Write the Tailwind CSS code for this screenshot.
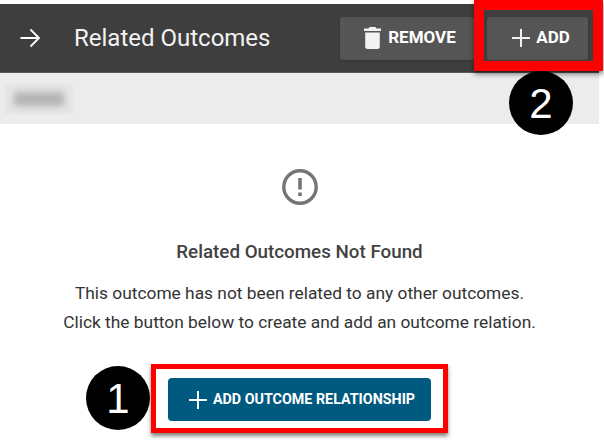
<!DOCTYPE html>
<html lang="en">
<head>
  <meta charset="UTF-8" />
  <title>Related Outcomes</title>
  <script src="https://cdn.jsdelivr.net/npm/@tailwindcss/browser@4"></script>
</head>
<body class="bg-white font-['Roboto',sans-serif] overflow-hidden">
  <div class="relative w-[604px] h-[444px] pt-1 overflow-hidden">
    <div class="w-[599px]">
      <!-- Header -->
      <div class="h-[69px] bg-[#3e3e3e] flex items-center text-white border-b border-[#5a5a5a]">
        <svg class="ml-[19px] w-[22px] h-[22px]" viewBox="0 0 22 22" fill="none" stroke="#fff" stroke-width="1.8">
          <path d="M1.5 11H20M11.5 2.5 20 11l-8.5 8.5" />
        </svg>
        <span class="ml-[33px] text-[24px] text-[#f2f2f2]">Related Outcomes</span>
        <div class="ml-auto mr-[11px] flex gap-[13px]">
          <button class="w-[134px] h-[43px] pl-[6px] bg-[#555555] rounded-[3px] flex items-center justify-center gap-[7px] text-[17px] font-bold shadow-sm">
            <svg class="w-[17px] h-[22px]" viewBox="0 0 17 22" fill="#f2f2f2">
              <path d="M5.5 0h6l1 1.5H17v2.5H0V1.5h4.500zM1.200 5.500h14.600V19.500a2.500 2.500 0 0 1-2.500 2.500H3.700a2.500 2.500 0 0 1-2.500-2.500z" />
            </svg>
            <span>REMOVE</span>
          </button>
          <button class="w-[101px] h-[43px] pl-[7px] bg-[#555555] rounded-[3px] flex items-center justify-center gap-[6px] text-[17px] font-bold shadow-sm">
            <svg class="w-[18px] h-[18px]" viewBox="0 0 18 18" stroke="#f2f2f2" stroke-width="2"><path d="M9 0v18M0 9h18" /></svg>
            <span>ADD</span>
          </button>
        </div>
      </div>
      <!-- Blurred subheader -->
      <div class="h-[51px] bg-[#ececec] flex items-center">
        <div class="ml-[5px] w-[68px] h-[30px] bg-[#e5e5e5] flex items-center justify-center blur-[1px]">
          <div class="w-[50px] h-[14px] bg-[#b4b4b4] blur-[3px]"></div>
        </div>
      </div>
      <!-- Empty state -->
      <div class="flex flex-col items-center">
        <svg class="mt-[45px] w-9 h-9" viewBox="0 0 36 36" fill="none">
          <circle cx="18" cy="18" r="16.200" stroke="#757575" stroke-width="3.400" />
          <path d="M16.200 9h3.600v11.500h-3.600zM16.200 23.500h3.600v3.600h-3.600z" fill="#757575" />
        </svg>
        <h2 class="mt-[34px] text-[18.800px] leading-[26px] font-medium text-[#424242]">Related Outcomes Not Found</h2>
        <p class="mt-[14px] text-[17.350px] leading-[29px] text-[#333333] text-center whitespace-nowrap">This outcome has not been related to any other outcomes.<br />Click the button below to create and add an outcome relation.</p>
        <button class="mt-[41px] w-[263px] h-[43px] pl-[5px] bg-[#005a80] rounded-[4px] flex items-center justify-center gap-[6px] text-white text-[14.300px] font-bold">
          <svg class="w-[18px] h-[18px]" viewBox="0 0 18 18" stroke="#fff" stroke-width="2"><path d="M9 0v18M0 9h18" /></svg>
          <span>ADD OUTCOME RELATIONSHIP</span>
        </button>
      </div>
    </div>
    <!-- Callouts -->
    <div class="absolute left-[474px] top-0 w-[129px] h-[71px] border-[10px] border-[#fe0000] shadow-[0_3px_5px_rgba(0,0,0,0.5)]"></div>
    <div class="absolute left-[151px] top-[364px] w-[297px] h-[69px] border-[5px] border-[#fe0000] shadow-[0_3px_4px_rgba(0,0,0,0.5)]"></div>
    <div class="absolute left-[509px] top-[71px] w-16 h-16 rounded-full bg-black text-white flex items-center justify-center text-[42px] font-['Liberation_Sans',sans-serif]">2</div>
    <div class="absolute left-[86px] top-[366px] w-16 h-16 rounded-full bg-black text-white flex items-center justify-center text-[42px] font-['Liberation_Sans',sans-serif]">1</div>
  </div>
</body>
</html>
